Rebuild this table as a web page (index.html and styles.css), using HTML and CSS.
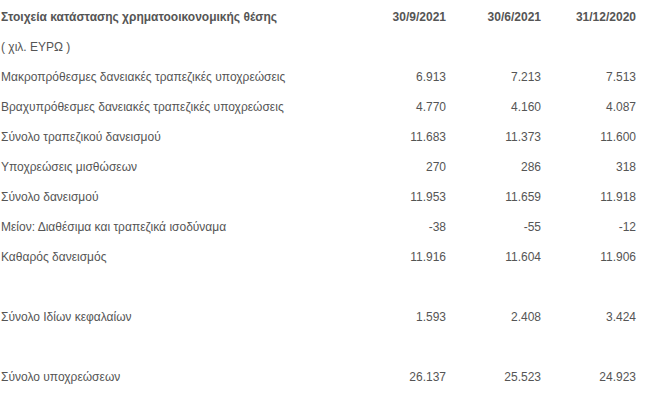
FILE: index.html
```html
<!DOCTYPE html>
<html lang="el">
<head>
<meta charset="utf-8">
<link rel="stylesheet" href="styles.css">
</head>
<body>
<div class="table">
  <div class="row head"><span class="label">Στοιχεία κατάστασης χρηματοοικονομικής θέσης</span><span class="num">30/9/2021</span><span class="num">30/6/2021</span><span class="num">31/12/2020</span></div>
  <div class="row"><span class="label">( χιλ. ΕΥΡΩ )</span><span class="num"></span><span class="num"></span><span class="num"></span></div>
  <div class="row"><span class="label">Μακροπρόθεσμες δανειακές τραπεζικές υποχρεώσεις</span><span class="num">6.913</span><span class="num">7.213</span><span class="num">7.513</span></div>
  <div class="row"><span class="label">Βραχυπρόθεσμες δανειακές τραπεζικές υποχρεώσεις</span><span class="num">4.770</span><span class="num">4.160</span><span class="num">4.087</span></div>
  <div class="row"><span class="label">Σύνολο τραπεζικού δανεισμού</span><span class="num">11.683</span><span class="num">11.373</span><span class="num">11.600</span></div>
  <div class="row"><span class="label">Υποχρεώσεις μισθώσεων</span><span class="num">270</span><span class="num">286</span><span class="num">318</span></div>
  <div class="row"><span class="label">Σύνολο δανεισμού</span><span class="num">11.953</span><span class="num">11.659</span><span class="num">11.918</span></div>
  <div class="row"><span class="label">Μείον: Διαθέσιμα και τραπεζικά ισοδύναμα</span><span class="num">-38</span><span class="num">-55</span><span class="num">-12</span></div>
  <div class="row"><span class="label">Καθαρός δανεισμός</span><span class="num">11.916</span><span class="num">11.604</span><span class="num">11.906</span></div>
  <div class="row"><span class="label"></span><span class="num"></span><span class="num"></span><span class="num"></span></div>
  <div class="row"><span class="label">Σύνολο Ιδίων κεφαλαίων</span><span class="num">1.593</span><span class="num">2.408</span><span class="num">3.424</span></div>
  <div class="row"><span class="label"></span><span class="num"></span><span class="num"></span><span class="num"></span></div>
  <div class="row"><span class="label">Σύνολο υποχρεώσεων</span><span class="num">26.137</span><span class="num">25.523</span><span class="num">24.923</span></div>
</div>
</body>
</html>
```
FILE: styles.css
```css
html, body {
  margin: 0;
  background: #ffffff;
}
body {
  padding: 2px 0 0 1px;
  font-family: "Liberation Sans", Arial, sans-serif;
  font-size: 12px;
  color: #555555;
}
.table {
  display: grid;
  grid-template-columns: 351px 94px 95px 95px;
}
.row {
  display: contents;
}
.row > span {
  height: 30px;
  line-height: 30px;
  white-space: nowrap;
}
.num {
  text-align: right;
}
.head > span {
  font-weight: bold;
}
```
